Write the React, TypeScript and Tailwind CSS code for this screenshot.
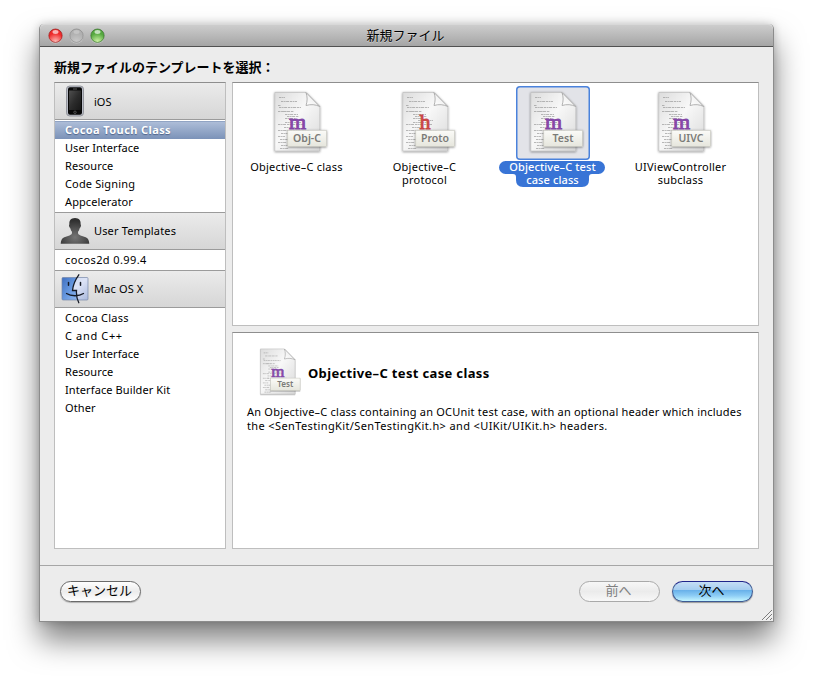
import React from "react";

const latin = "font-['Noto_Sans','Noto_Sans_CJK_JP',sans-serif]";
const japanese = "font-['Noto_Sans_CJK_JP',sans-serif]";

function DocIcon({ id, letter, tag, size = 74 }: { id: string; letter: string; tag: string; size?: number }) {
  const lines: [number, number, number][] = [
    [19, 11, 6], [21, 15, 16], [18, 19, 3], [19, 21, 22], [18, 25, 10], [22, 25, 12],
    [25, 28, 13], [27, 30, 12], [25, 32, 10], [30, 34, 15], [25, 36, 16], [18, 38, 8],
    [27, 38, 17], [24, 41, 12], [18, 44, 8], [24, 44, 25], [21, 47, 8], [18, 50, 7],
    [20, 53, 8], [18, 56, 9], [21, 59, 11], [20, 62, 9],
  ];
  const ink = letter === "h" ? "#cb4646" : "#8548a8";
  return (
    <svg width={size} height={size} viewBox="0 0 74 74" className="block shrink-0">
      <defs>
        <linearGradient id={`${id}-page`} x1="0" y1="0" x2="1" y2="1">
          <stop offset="0" stopColor="#dcdcdc" />
          <stop offset=".45" stopColor="#f8f8f8" />
          <stop offset="1" stopColor="#d8d8d8" />
        </linearGradient>
        <linearGradient id={`${id}-fold`} x1="0" y1="1" x2="1" y2="0">
          <stop offset="0" stopColor="#ffffff" />
          <stop offset=".5" stopColor="#f2f2f2" />
          <stop offset="1" stopColor="#b5b5b5" />
        </linearGradient>
        <linearGradient id={`${id}-tag`} x1="0" y1="0" x2="0" y2="1">
          <stop offset="0" stopColor="#fbfbf8" />
          <stop offset="1" stopColor="#e6e6dd" />
        </linearGradient>
        <filter id={`${id}-shadow`} x="-20%" y="-20%" width="140%" height="140%">
          <feDropShadow dx="0" dy="0.6" stdDeviation="0.8" floodColor="#000" floodOpacity=".5" />
        </filter>
      </defs>
      <path d="M14.800 6.500H46L59.800 20.500V65H14.800Z" fill={`url(#${id}-page)`} stroke="#b9b9b9" strokeWidth=".6" filter={`url(#${id}-shadow)`} />
      <g stroke="#8e8e8e" strokeWidth="1" strokeDasharray="2.500 .6 1.500 .5 3 .8" opacity=".6">
        {lines.map(([x, y, w], i) => (
          <line key={i} x1={x} x2={x + w} y1={y + 0.5} y2={y + 0.5} />
        ))}
      </g>
      <path d="M46 6.500C47.500 11 47.500 15 46 19.500C51 18 55.500 18.500 59.800 20.500Z" fill={`url(#${id}-fold)`} stroke="#a0a0a0" strokeWidth=".8" />
      <text
        x={letter === "h" ? "37" : "37.600"}
        y="43"
        textAnchor="middle"
        fontFamily="Liberation Serif, serif"
        fontSize="22"
        fill={ink}
        stroke={ink}
        strokeWidth=".9"
      >
        {letter}
      </text>
      <rect x="27.800" y="44.300" width="38.500" height="16" fill={`url(#${id}-tag)`} stroke="#c9c9c0" strokeWidth=".6" filter={`url(#${id}-shadow)`} />
      <text x="47" y="56.300" textAnchor="middle" fontFamily="Noto Sans, sans-serif" fontWeight="600" fontSize="10.500" fill="#7b7b78">
        {tag}
      </text>
    </svg>
  );
}

function PhoneIcon() {
  return (
    <svg width="28" height="32" viewBox="0 0 28 32" className="block">
      <defs>
        <linearGradient id="phone-glass" x1="0" y1="0" x2="1" y2="1">
          <stop offset="0" stopColor="#505050" />
          <stop offset=".5" stopColor="#2c2c2c" />
          <stop offset="1" stopColor="#171717" />
        </linearGradient>
      </defs>
      <rect x="5.500" y="1" width="17" height="30" rx="3.200" fill="#b9bcc6" stroke="#85888f" strokeWidth=".8" />
      <rect x="7" y="2.300" width="14" height="27.400" rx="2" fill="#080808" />
      <rect x="8" y="5.500" width="12" height="19.500" fill="url(#phone-glass)" />
      <path d="M12 4H16" stroke="#777" strokeWidth=".7" />
      <circle cx="14" cy="27.300" r="1.300" fill="#171717" stroke="#777" strokeWidth=".5" />
    </svg>
  );
}

function PersonIcon() {
  return (
    <svg width="30" height="28" viewBox="0 0 30 28" className="block">
      <defs>
        <radialGradient id="person-fill" cx=".5" cy=".75" r=".65">
          <stop offset="0" stopColor="#767676" />
          <stop offset="1" stopColor="#303030" />
        </radialGradient>
      </defs>
      <path
        d="M15 1C10.800 1 9 3.800 9.400 7.200C8.600 7.500 9 10.500 10.200 11C10.700 13 11.400 14.100 12 14.800C12.200 17 11.400 17.700 9.500 18.500L4.300 20.300C1.600 21.300 1 23.500 .7 26.700H29.300C29 23.500 28.400 21.300 25.700 20.300L20.500 18.500C18.600 17.700 17.800 17 18 14.800C18.600 14.100 19.300 13 19.800 11C21 10.500 21.400 7.500 20.600 7.200C21 3.800 19.200 1 15 1Z"
        fill="url(#person-fill)"
      />
    </svg>
  );
}

function FinderIcon() {
  return (
    <svg width="28" height="30" viewBox="0 0 28 30" className="block">
      <defs>
        <linearGradient id="finder-left" x1="0" y1="0" x2="1" y2="1">
          <stop offset="0" stopColor="#3f6fc0" />
          <stop offset=".5" stopColor="#6496de" />
          <stop offset="1" stopColor="#8fb6ee" />
        </linearGradient>
        <linearGradient id="finder-right" x1="0" y1="0" x2="1" y2="1">
          <stop offset="0" stopColor="#c6d5ef" />
          <stop offset=".5" stopColor="#dce3f6" />
          <stop offset="1" stopColor="#aab9dc" />
        </linearGradient>
      </defs>
      <rect x="1" y="3.500" width="26" height="22.500" rx="1" fill="url(#finder-right)" />
      <path d="M2 3.500H16C14 8 12 12 11.500 16.500H15.500C15 19.500 15.300 23 16 26H2Q1 26 1 25V4.500Q1 3.500 2 3.500Z" fill="url(#finder-left)" />
      <rect x="1" y="3.500" width="26" height="22.500" rx="1" fill="none" stroke="#7787a8" strokeWidth=".7" />
      <path d="M17.800 .8C14 6 12 11 11.500 16.500H15.500C15.200 21 15.700 25 17.800 28.700" fill="none" stroke="#151a25" strokeWidth="1.300" strokeLinecap="round" />
      <path d="M7.500 8.500V11.200M19.500 8.500V11.200" stroke="#151a25" strokeWidth="1.500" strokeLinecap="round" />
      <path d="M5.500 19.500C10 22.500 18 22.500 22.500 19.500" fill="none" stroke="#151a25" strokeWidth="1.300" strokeLinecap="round" />
    </svg>
  );
}

function GroupHeader({ icon, label }: { icon: React.ReactNode; label: string }) {
  return (
    <div className="flex h-[37px] items-center border-b border-[#9b9b9b] bg-linear-to-b from-[#ebebeb] to-[#d6d6d6] pl-[5px] text-[11px]">
      <div className="flex w-[30px] justify-center">{icon}</div>
      <span className={label === "iOS" ? "ml-1 pt-[2px]" : "ml-1 tracking-[0.15px]"}>{label}</span>
    </div>
  );
}

const rowTracking: Record<string, string> = {
  "C and C++": "tracking-[0.65px]",
  "Cocoa Class": "tracking-[0.25px]",
  "cocos2d 0.99.4": "tracking-[0.4px]",
  "Code Signing": "tracking-[0.15px]",
  "User Interface": "tracking-[0.05px]",
};

function Rows({ items, selected, last }: { items: string[]; selected?: string; last?: boolean }) {
  return (
    <ul className={last ? "pt-px" : "border-b border-[#9b9b9b] py-px"}>
      {items.map((item) => (
        <li
          key={item}
          className={
            item === selected
              ? "h-[18px] border-t border-[#91a4c4] bg-linear-to-b from-[#adbdd8] to-[#7b92b8] pl-[10px] text-[11px] leading-[15px] font-bold tracking-[0.4px] text-white [text-shadow:0_1px_1px_rgba(40,60,100,.6)]"
              : `h-[18px] pl-[10px] text-[11px] leading-[18px] ${rowTracking[item] ?? "tracking-[0.1px]"}`
          }
        >
          {item}
        </li>
      ))}
    </ul>
  );
}

function Light({ color }: { color: "red" | "gray" | "green" }) {
  const fills = {
    red: ["#ee2a2a", "#ffc0bb", "#8f1414"],
    gray: ["#b0b0b0", "#cacaca", "#858585"],
    green: ["#55a83f", "#d2f7a8", "#2f6a25"],
  }[color];
  return (
    <svg width="15" height="16" viewBox="0 0 15 16" className="block">
      <defs>
        <radialGradient id={`light-${color}`} cx=".5" cy=".95" r=".8">
          <stop offset="0" stopColor={fills[1]} />
          <stop offset=".8" stopColor={fills[0]} />
        </radialGradient>
      </defs>
      <circle cx="7.500" cy="8.500" r="7" fill="#fff" opacity=".4" />
      <circle cx="7.500" cy="7.700" r="6.700" fill={`url(#light-${color})`} stroke={fills[2]} strokeWidth=".9" strokeOpacity=".75" />
      <ellipse cx="7.500" cy="4" rx="3" ry="1.900" fill="#fff" opacity={color === "gray" ? ".25" : ".65"} />
    </svg>
  );
}

const templates = [
  { id: "objc", letter: "m", tag: "Obj-C", lines: ["Objective–C class"] },
  { id: "proto", letter: "h", tag: "Proto", lines: ["Objective–C", "protocol"] },
  { id: "test", letter: "m", tag: "Test", lines: ["Objective–C test", "case class"], selected: true },
  { id: "uivc", letter: "m", tag: "UIVC", lines: ["UIViewController", "subclass"] },
];

function SelectedLabelShape() {
  return (
    <svg width="106" height="26" viewBox="0 0 106 26" className="absolute top-px left-[10px]">
      <path
        d="M6.500 0H99.500A6.500 6.500 0 0 1 99.500 13H93Q90 13 90 16V19Q90 26 83 26H24Q17 26 17 19V16Q17 13 14 13H6.500A6.500 6.500 0 0 1 6.500 0Z"
        fill="#3874d6"
      />
    </svg>
  );
}

export default function App() {
  return (
    <div className={`h-[676px] w-[813px] overflow-hidden bg-white pt-[24px] pl-[39px] text-black ${latin}`}>
      <div className="flex h-[598px] w-[735px] flex-col rounded-t-[5px] border-x border-b border-[#8c8c8c] bg-[#ececec] shadow-[0_18px_30px_rgba(0,0,0,.5),0_0_8px_rgba(0,0,0,.2)]">
        <header className="relative flex h-[23px] shrink-0 items-center rounded-t-[5px] border-t border-b border-t-[#d8d8d8] border-b-[#515151] bg-linear-to-b from-[#cdcdcd] to-[#a5a5a5]">
          <div className="absolute top-[3px] left-[7.500px] flex gap-[6px]">
            <Light color="red" />
            <Light color="gray" />
            <Light color="green" />
          </div>
          <h1 className={`w-full pr-[2px] text-center text-[13px] leading-[19px] [text-shadow:0_1px_0_rgba(255,255,255,.4)] ${japanese}`}>
            <span className="block pb-[2px]">新規ファイル</span>
          </h1>
        </header>

        <div className="flex h-[519px] shrink-0 flex-col border-b border-[#a6a6a6] px-[14px] pt-[10px]">
          <h2 className={`h-[25px] text-[13px] leading-[20px] font-bold ${japanese}`}>新規ファイルのテンプレートを選択：</h2>
          <div className="flex gap-[6px]">
            <aside className="h-[467px] w-[172px] border border-[#bebebe] border-t-[#8e8e8e] bg-white">
              <GroupHeader icon={<PhoneIcon />} label="iOS" />
              <Rows selected="Cocoa Touch Class" items={["Cocoa Touch Class", "User Interface", "Resource", "Code Signing", "Appcelerator"]} />
              <GroupHeader icon={<PersonIcon />} label="User Templates" />
              <Rows items={["cocos2d 0.99.4"]} />
              <GroupHeader icon={<FinderIcon />} label="Mac OS X" />
              <Rows last items={["Cocoa Class", "C and C++", "User Interface", "Resource", "Interface Builder Kit", "Other"]} />
            </aside>

            <main className="flex w-[527px] flex-col gap-[6px]">
              <section className="flex h-[244px] border border-[#bebebe] border-t-[#8e8e8e] bg-white pt-[3px]">
                {templates.map((t) => (
                  <div key={t.id} className="flex w-[128px] flex-col items-center">
                    <div className={t.selected ? "rounded-[4px] bg-[#e2e3e8] shadow-[inset_0_0_0_1.500px_#4a82dc]" : ""}>
                      <DocIcon id={t.id} letter={t.letter} tag={t.tag} />
                    </div>
                    <div className="relative w-full pr-px text-center text-[11px] leading-[13px] whitespace-nowrap">
                      {t.selected && <SelectedLabelShape />}
                      <p className={t.selected ? "relative font-medium tracking-[0.1px] text-white" : "tracking-[0.25px]"}>
                        {t.lines[0]}
                        {t.lines[1] && (
                          <>
                            <br />
                            {t.lines[1]}
                          </>
                        )}
                      </p>
                    </div>
                  </div>
                ))}
              </section>

              <section className="h-[217px] border border-[#bebebe] border-t-[#8e8e8e] bg-white pt-[11px] pl-[14px]">
                <div className="flex h-[61px] pl-[2px]">
                  <DocIcon id="detail" letter="m" tag="Test" size={57} />
                  <h3 className="ml-[2px] pt-[19px] text-[13px] leading-[20px] font-bold tracking-[0.34px]">Objective–C test case class</h3>
                </div>
                <p className="text-[11px] leading-[14px] tracking-[0.22px] whitespace-nowrap">
                  An Objective–C class containing an OCUnit test case, with an optional header which includes
                  <br />
                  <span className="tracking-[0.38px]">the &lt;SenTestingKit/SenTestingKit.h&gt; and &lt;UIKit/UIKit.h&gt; headers.</span>
                </p>
              </section>
            </main>
          </div>
        </div>

        <footer className={`relative flex flex-1 items-start pt-[15px] pr-[20px] pl-[20px] text-[13px] leading-[16px] ${japanese}`}>
          <button className="h-[21px] w-[81px] rounded-full border border-[#6a6a6a] bg-linear-to-b from-white via-[#ececec] to-white pr-[2px] pb-[3px] shadow-[0_1px_1px_rgba(0,0,0,.25)]">キャンセル</button>
          <button className="mr-[12px] ml-auto h-[21px] w-[81px] rounded-full border border-[#a9a9a9] bg-linear-to-b from-[#f7f7f7] via-[#ebebeb] to-[#f8f8f8] pr-[2px] pb-[3px] text-[#808080]">前へ</button>
          <button className="h-[21px] w-[81px] rounded-full border border-[#3d5a93] border-t-[#20258a] bg-[linear-gradient(#c5ddf5_0%,#a5cdf0_42%,#67b0e9_43%,#8dcdf5_72%,#c4f5ff_100%)] pr-[2px] pb-[3px] shadow-[0_1px_1px_rgba(0,0,0,.35)]">次へ</button>
          <svg width="12" height="12" viewBox="0 0 12 12" className="absolute right-0 bottom-0">
            <path d="M1 11L11 1M5 11L11 5M9 11L11 9" stroke="#7c7c7c" strokeWidth="1" />
            <path d="M2 11.500L11.500 2M6 11.500L11.500 6" stroke="#fff" strokeWidth=".6" />
          </svg>
        </footer>
      </div>
    </div>
  );
}
